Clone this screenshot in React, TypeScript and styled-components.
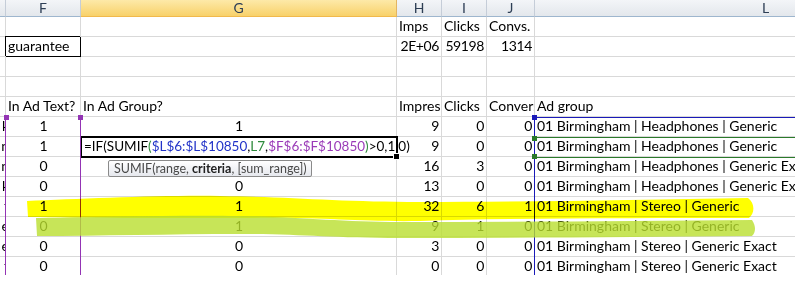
import React from 'react';
import styled, { createGlobalStyle, css } from 'styled-components';

const GlobalStyle = createGlobalStyle`
    body {
        margin: 0;
        background: #fff;
        font-family: Lato, "Liberation Sans", sans-serif;
        color: #000;
    }
`;

const Sheet = styled.div`
    position: relative;
    width: 795px;
    height: 275px;
    overflow: hidden;
    display: grid;
    grid-template-columns: 6px 75px 316px 45px 45px 48px 462px;
    grid-template-rows: 17px repeat(13, 20px);
    font-size: 14px;
`;

const HeaderCell = styled.div<{ $active?: boolean }>`
    display: flex;
    align-items: center;
    justify-content: center;
    box-sizing: border-box;
    border-right: 1px solid ${props => props.$active ? '#e3b562' : '#c5cdd8'};
    border-bottom: 1px solid ${props => props.$active ? '#f1b94c' : '#9eb6ce'};
    background: ${props => props.$active
        ? 'linear-gradient(#fde9a8, #f8d16a)'
        : 'linear-gradient(#f3f5f8, #e3e7ec)'};
    color: #2d3e55;
    font-size: 14px;
    line-height: 16px;
`;

const Cell = styled.div<{ $align?: 'left' | 'center' | 'right' }>`
    display: flex;
    align-items: flex-end;
    justify-content: ${props => props.$align === 'right' ? 'flex-end' : props.$align === 'center' ? 'center' : 'flex-start'};
    box-sizing: border-box;
    min-width: 0;
    overflow: hidden;
    white-space: nowrap;
    padding: 0 ${props => props.$align === 'right' ? '2px' : '1px'} 1px 2px;
    border-right: 1px solid #d9d9d9;
    border-bottom: 1px solid #d9d9d9;
    line-height: 18px;
    letter-spacing: ${props => props.$align === 'right' ? '-0.4px' : '0'};
`;

const EdgeCell = styled(Cell)`
    justify-content: flex-end;
    padding: 0 0 1px;
    span {
        margin-right: -4px;
    }
`;

const BoxedCell = styled(Cell)`
    border-right-color: #000;
    border-bottom-color: #000;
    box-shadow: -1px -1px 0 0 #000;
`;

const ActiveCell = styled(Cell)`
    position: relative;
    overflow: visible;
    outline: 2px solid #000;
    outline-offset: -1px;
    padding-left: 3px;
    font-size: 13.5px;
    letter-spacing: 0;
    z-index: 1;

    &::after {
        content: '';
        position: absolute;
        right: -4px;
        bottom: -4px;
        width: 5px;
        height: 5px;
        background: #000;
        border: 1px solid #fff;
    }
`;

const Ref = styled.span<{ $tone: 'blue' | 'green' | 'purple' }>`
    color: ${props => ({ blue: '#2233c8', green: '#2e8a3c', purple: '#9a3bb8' })[props.$tone]};
`;

const Caret = styled.span`
    display: inline-block;
    width: 1px;
    height: 19px;
    margin: 0 0 -4px;
    background: #000;
`;

const Tooltip = styled.div`
    position: absolute;
    left: 108px;
    top: 160px;
    height: 17px;
    box-sizing: border-box;
    padding: 0 4px 0 5px;
    border: 1px solid #8a8a8a;
    border-radius: 2px;
    background: linear-gradient(#ffffff, #e6e8ee);
    color: #4a4a4a;
    font-size: 12.5px;
    line-height: 15px;
    white-space: nowrap;
    z-index: 3;

    b {
        color: #222;
    }
`;

const rangeLine = css<{ $color: string }>`
    position: absolute;
    background: ${props => props.$color};
    z-index: 2;
`;

const VLine = styled.div<{ $color: string; $x: number; $y: number }>`
    ${rangeLine};
    left: ${props => props.$x}px;
    top: ${props => props.$y}px;
    bottom: 0;
    width: 1px;
`;

const HLine = styled.div<{ $color: string; $x: number; $y: number }>`
    ${rangeLine};
    left: ${props => props.$x}px;
    top: ${props => props.$y}px;
    right: 0;
    height: 1px;
`;

const Handle = styled.div<{ $color: string; $x: number; $y: number }>`
    ${rangeLine};
    left: ${props => props.$x - 2}px;
    top: ${props => props.$y - 2}px;
    width: 5px;
    height: 5px;
    z-index: 3;
`;

const Marker = styled.svg<{ $blend?: string }>`
    position: absolute;
    left: 0;
    top: 0;
    pointer-events: none;
    z-index: 4;
    mix-blend-mode: ${props => props.$blend || 'normal'};
`;

type Row = {
    e?: string;
    f?: string;
    g?: string;
    h?: string;
    i?: string;
    j?: string;
    l?: string;
};

const labelRows: Row[] = [
    { h: 'Imps', i: 'Clicks', j: 'Convs.' },
    { f: 'guarantee', h: '2E+06', i: '59198', j: '1314' },
    {},
    {},
    { f: 'In Ad Text?', g: 'In Ad Group?', h: 'Impressions', i: 'Clicks', j: 'Conversions', l: 'Ad group' },
];

const dataRows: Row[] = [
    { e: 'k', f: '1', g: '1', h: '9', i: '0', j: '0', l: '01 Birmingham | Headphones | Generic' },
    { e: 'n', f: '1', g: '', h: '9', i: '0', j: '0', l: '01 Birmingham | Headphones | Generic' },
    { e: 'n', f: '0', g: '0', h: '16', i: '3', j: '0', l: '01 Birmingham | Headphones | Generic Exact' },
    { e: 'k', f: '0', g: '0', h: '13', i: '0', j: '0', l: '01 Birmingham | Headphones | Generic Exact' },
    { e: 'f', f: '1', g: '1', h: '32', i: '6', j: '1', l: '01 Birmingham | Stereo | Generic' },
    { e: 'e', f: '0', g: '1', h: '9', i: '1', j: '0', l: '01 Birmingham | Stereo | Generic' },
    { e: 'e', f: '0', g: '0', h: '3', i: '0', j: '0', l: '01 Birmingham | Stereo | Generic Exact' },
    { e: 'f', f: '0', g: '0', h: '0', i: '0', j: '0', l: '01 Birmingham | Stereo | Generic Exact' },
];

const Formula = () => (
    <ActiveCell>
        =IF(SUMIF<Ref $tone="green">(</Ref>
        <Ref $tone="blue">$L$6:$L$10850</Ref>,<Caret />
        <Ref $tone="green">L7</Ref>,
        <Ref $tone="purple">$F$6:$F$10850</Ref>
        <Ref $tone="green">)</Ref>&gt;0,1,0)
    </ActiveCell>
);

const App = () => (
    <>
        <GlobalStyle />
        <Sheet>
            {['', 'F', 'G', 'H', 'I', 'J', 'L'].map(col => (
                <HeaderCell key={col || 'E'} $active={col === 'G'}>{col}</HeaderCell>
            ))}

            {labelRows.map((row, idx) => {
                const numeric = idx === 1;
                return (
                    <React.Fragment key={`label-${idx}`}>
                        <EdgeCell />
                        {row.f === 'guarantee'
                            ? <BoxedCell>{row.f}</BoxedCell>
                            : <Cell>{row.f}</Cell>}
                        <Cell>{row.g}</Cell>
                        <Cell $align={numeric ? 'right' : 'left'}>{row.h}</Cell>
                        <Cell $align={numeric ? 'right' : 'left'}>{row.i}</Cell>
                        <Cell $align={numeric ? 'right' : 'left'}>{row.j}</Cell>
                        <Cell>{row.l}</Cell>
                    </React.Fragment>
                );
            })}

            {dataRows.map((row, idx) => (
                <React.Fragment key={`data-${idx}`}>
                    <EdgeCell><span>{row.e}</span></EdgeCell>
                    <Cell $align="center">{row.f}</Cell>
                    {idx === 1 ? <Formula /> : <Cell $align="center">{row.g}</Cell>}
                    <Cell $align="right">{row.h}</Cell>
                    <Cell $align="right">{row.i}</Cell>
                    <Cell $align="right">{row.j}</Cell>
                    <Cell>{row.l}</Cell>
                </React.Fragment>
            ))}

            {/* $F$6:$F$10850 */}
            <VLine $color="#9334b4" $x={5} $y={117} />
            <VLine $color="#9334b4" $x={80} $y={117} />
            <Handle $color="#9334b4" $x={6} $y={117} />
            <Handle $color="#9334b4" $x={80} $y={117} />

            {/* $L$6:$L$10850 and L7 */}
            <VLine $color="#1a1ab8" $x={534} $y={117} />
            <HLine $color="#1a1ab8" $x={534} $y={117} />
            <HLine $color="#2b7a2b" $x={535} $y={137} />
            <HLine $color="#2b7a2b" $x={535} $y={157} />
            <Handle $color="#1a1ab8" $x={534} $y={117} />
            <Handle $color="#2b7a2b" $x={534} $y={138} />
            <Handle $color="#2b7a2b" $x={534} $y={156} />

            <Tooltip>SUMIF(range, <b>criteria</b>, [sum_range])</Tooltip>

            <Marker width="795" height="275" viewBox="0 0 795 275" $blend="multiply">
                <path
                    d="M27 201 C 80 199, 160 195, 220 196 C 290 197, 340 202, 420 202 C 520 202, 640 200, 748 198 C 755 203, 755 213, 749 218 C 640 218, 520 218, 420 221 C 360 222, 320 217, 250 218 C 160 218, 80 218, 28 217 Z"
                    fill="#ffff00"
                />
            </Marker>
            <Marker width="795" height="275" viewBox="0 0 795 275">
                <path
                    d="M36 218 C 100 217, 180 215, 240 216 C 300 217, 340 222, 400 222 C 520 222, 640 221, 752 220 C 756 226, 756 232, 752 236 C 640 237, 520 238, 400 238 C 330 238, 300 234, 240 234 C 170 234, 100 236, 37 236 Z"
                    fill="#b9df2e"
                    fillOpacity={0.8}
                />
            </Marker>
        </Sheet>
    </>
);

export default App;
